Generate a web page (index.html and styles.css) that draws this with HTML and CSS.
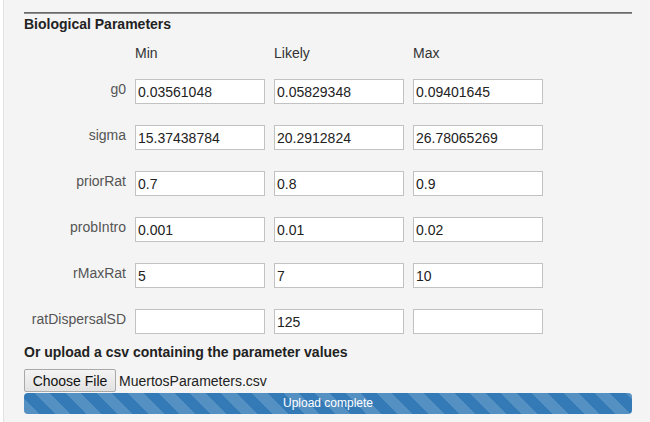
FILE: index.html
```html
<!DOCTYPE html>
<html>
<head>
<meta charset="utf-8">
<link rel="stylesheet" href="styles.css">
</head>
<body>
<div class="well">
  <div class="rule"></div>
  <h4 class="title">Biological Parameters</h4>
  <div class="grid">
    <div class="corner"></div>
    <div class="colhead">Min</div>
    <div class="colhead">Likely</div>
    <div class="colhead">Max</div>

    <div class="lbl">g0</div>
    <input class="field" value="0.03561048">
    <input class="field" value="0.05829348">
    <input class="field" value="0.09401645">

    <div class="lbl">sigma</div>
    <input class="field" value="15.37438784">
    <input class="field" value="20.2912824">
    <input class="field" value="26.78065269">

    <div class="lbl">priorRat</div>
    <input class="field" value="0.7">
    <input class="field" value="0.8">
    <input class="field" value="0.9">

    <div class="lbl">probIntro</div>
    <input class="field" value="0.001">
    <input class="field" value="0.01">
    <input class="field" value="0.02">

    <div class="lbl">rMaxRat</div>
    <input class="field" value="5">
    <input class="field" value="7">
    <input class="field" value="10">

    <div class="lbl">ratDispersalSD</div>
    <input class="field" value="">
    <input class="field" value="125">
    <input class="field" value="">
  </div>
  <h4 class="title upload-title">Or upload a csv containing the parameter values</h4>
  <div class="filerow">
    <button class="choose">Choose File</button>
    <span class="fname">MuertosParameters.csv</span>
  </div>
  <div class="progress"><div class="bar">Upload complete</div></div>
</div>
</body>
</html>
```

FILE: styles.css
```css
html, body {
  margin: 0;
  padding: 0;
  background: #ffffff;
  height: 100%;
  overflow: hidden;
}
body {
  font-family: "Liberation Sans", Arial, sans-serif;
  font-size: 14px;
  line-height: 20px;
  color: #333;
}
.well {
  margin-left: 3px;
  border-left: 1px solid #e3e3e3;
  background: #f4f4f4;
  height: 100%;
  padding: 12px 17px 0 20px;
  box-sizing: border-box;
}
.rule {
  height: 2px;
  background: linear-gradient(#6a6a6a 0 1px, #8c8c8c 1px 2px);
  width: 608px;
}
.title {
  margin: 0;
  font-size: 14px;
  font-weight: bold;
  line-height: 20px;
  color: #222;
}
.grid {
  display: grid;
  grid-template-columns: 102px 130px 130px 130px;
  grid-template-rows: 15px;
  grid-auto-rows: 25px;
  column-gap: 9px;
  row-gap: 21px;
  margin-top: 9px;
}
.colhead {
  color: #333;
  line-height: 20px;
  align-self: start;
}
.lbl {
  text-align: right;
  color: #555;
  line-height: 20px;
}
.field {
  box-sizing: border-box;
  width: 130px;
  height: 25px;
  margin: 0;
  border: 1px solid #c2c2c2;
  background: #fff;
  font-family: "Liberation Sans", Arial, sans-serif;
  font-size: 14px;
  color: #222;
  padding: 1px 2px 0 2px;
  outline: none;
}
.upload-title {
  margin-top: 8px;
}
.filerow {
  display: flex;
  align-items: center;
  gap: 3px;
  margin-top: 7px;
  height: 23px;
}
.choose {
  box-sizing: border-box;
  height: 23px;
  width: 92px;
  padding: 0;
  font-family: "Liberation Sans", Arial, sans-serif;
  font-size: 14px;
  color: #111;
  background: linear-gradient(#f4f4f4, #e2e2e2);
  border: 1px solid #a9a9a9;
  border-radius: 2px;
}
.fname {
  font-size: 14px;
  color: #222;
}
.progress {
  width: 608px;
  height: 21px;
  margin-top: 1px;
  border-radius: 4px;
  overflow: hidden;
  background: #f5f5f5;
}
.bar {
  height: 100%;
  background-color: #337ab7;
  background-image: repeating-linear-gradient(45deg,
    rgba(255,255,255,0.17) 0 11px,
    transparent 11px 22px);
  color: #fff;
  font-size: 12px;
  line-height: 21px;
  text-align: center;
}
```
